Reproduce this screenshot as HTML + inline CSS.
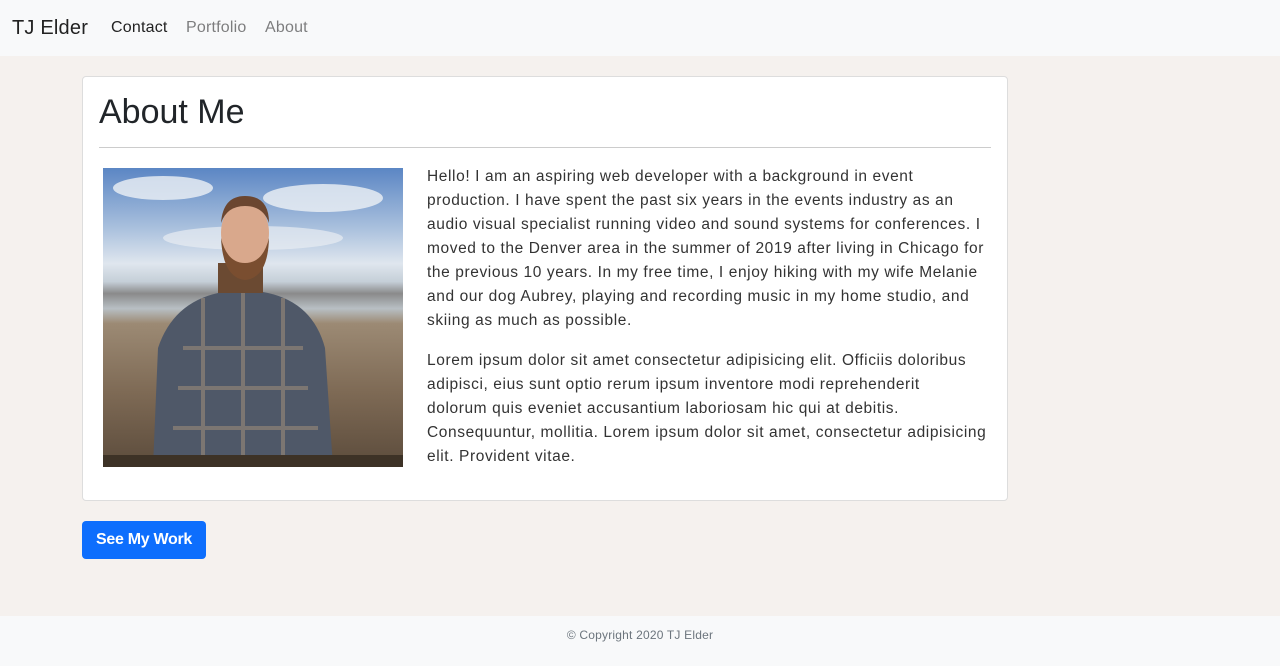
<!DOCTYPE html>
<html><head><meta charset="utf-8"><style>
*{margin:0;padding:0;box-sizing:border-box}
body{width:1280px;height:666px;background:#f5f1ee;font-family:"Liberation Sans",sans-serif;color:#212529;position:relative;overflow:hidden}
.nav{position:absolute;top:0;left:0;width:1280px;height:56px;background:#f8f9fa}
.nav span{position:absolute;top:19px;font-size:16px;color:rgba(0,0,0,.5);letter-spacing:0.2px}
.brand{left:12px!important;top:17px!important;font-size:20px!important;color:#222!important}
.card{position:absolute;left:82px;top:76px;width:926px;height:425px;background:#fff;border:1px solid #ddd;border-radius:4px}
h1{position:absolute;left:16px;top:16px;font-size:34px;font-weight:400;letter-spacing:0px}
hr{position:absolute;left:16px;top:70px;width:892px;border:0;border-top:1px solid #ccc}
.photo{position:absolute;left:20px;top:91px;width:300px;height:299px;overflow:hidden;background:linear-gradient(#5b86c4 0%,#a9c0dd 20%,#dfe6ee 32%,#c5cfd8 38%,#8a8a8a 42%,#b8bfc4 47%,#9c8a74 52%,#7e6a55 75%,#5c4c3c 100%)}
.txt{position:absolute;left:344px;top:88px;font-size:15.5px;line-height:24px;color:#333;white-space:nowrap;letter-spacing:0.6px}
.txt p{margin-bottom:16px}
.btn{position:absolute;left:82px;top:521px;width:124px;height:38px;background:#0d6efd;color:#fff;border-radius:4px;font-size:16px;font-weight:bold;text-align:center;line-height:38px;letter-spacing:-0.3px}
.foot{position:absolute;left:0;top:616px;width:1280px;height:50px;background:#f8f9fa;text-align:center;font-size:12px;color:#6c757d;line-height:38px;letter-spacing:0.2px}
</style></head><body>
<div class="nav"><span class="brand">TJ Elder</span><span style="left:111px;color:#222">Contact</span><span style="left:186px">Portfolio</span><span style="left:265px">About</span></div>
<div class="card">
<h1>About Me</h1><hr>
<div class="photo">
<svg width="300" height="299" viewBox="0 0 300 299">
<ellipse cx="60" cy="20" rx="50" ry="12" fill="#eef1f5" opacity=".8"/>
<ellipse cx="220" cy="30" rx="60" ry="14" fill="#eef1f5" opacity=".8"/>
<ellipse cx="150" cy="70" rx="90" ry="12" fill="#e8edf2" opacity=".7"/>
<path d="M50 299 L55 180 Q70 135 115 125 L140 120 L165 125 Q210 135 222 180 L230 299 Z" fill="#4f5868"/>
<path d="M80 180 L200 180 M75 220 L205 220 M70 260 L215 260 M100 130 L100 299 M140 125 L140 299 M180 130 L180 299" stroke="#9a8a7a" stroke-width="4" opacity=".6"/>
<rect x="115" y="95" width="45" height="30" fill="#6b4a32"/>
<ellipse cx="142" cy="65" rx="24" ry="32" fill="#d9a88c"/>
<path d="M118 70 Q120 110 142 112 Q165 110 166 70 Q160 95 142 95 Q124 95 118 70Z" fill="#7a4e30"/>
<path d="M118 55 Q120 28 142 28 Q166 28 166 55 Q160 38 142 38 Q124 38 118 55Z" fill="#6b4630"/>
<rect x="0" y="287" width="300" height="12" fill="#3d3226"/>
</svg></div>
<div class="txt">
<p>Hello! I am an aspiring web developer with a background in event<br>production. I have spent the past six years in the events industry as an<br>audio visual specialist running video and sound systems for conferences. I<br>moved to the Denver area in the summer of 2019 after living in Chicago for<br>the previous 10 years. In my free time, I enjoy hiking with my wife Melanie<br>and our dog Aubrey, playing and recording music in my home studio, and<br>skiing as much as possible.</p>
<p>Lorem ipsum dolor sit amet consectetur adipisicing elit. Officiis doloribus<br>adipisci, eius sunt optio rerum ipsum inventore modi reprehenderit<br>dolorum quis eveniet accusantium laboriosam hic qui at debitis.<br>Consequuntur, mollitia. Lorem ipsum dolor sit amet, consectetur adipisicing<br>elit. Provident vitae.</p>
</div>
</div>
<div class="btn">See My Work</div>
<div class="foot">© Copyright 2020 TJ Elder</div>
</body></html>
